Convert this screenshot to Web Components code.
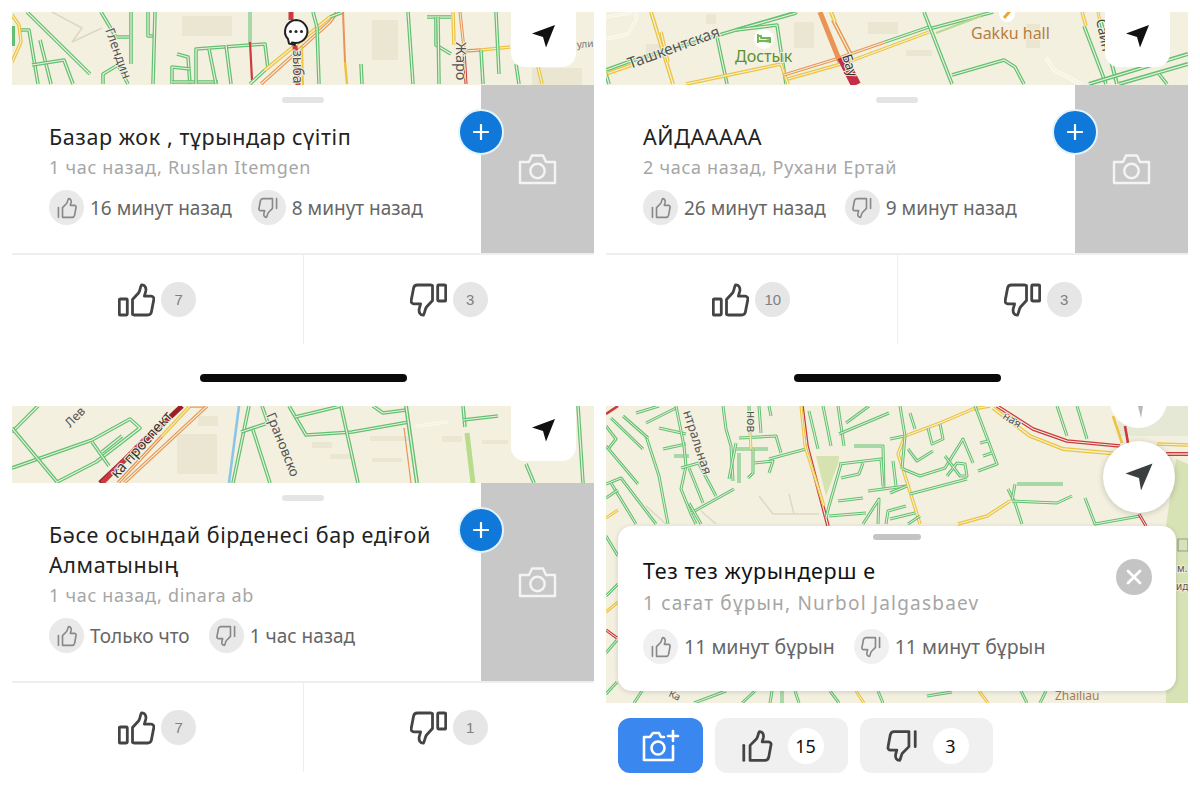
<!doctype html>
<html>
<head>
<meta charset="utf-8">
<style>
  html, body { margin: 0; background: #fff; }
  body { width: 1200px; height: 800px; overflow: hidden; font-family: "Noto Sans", sans-serif; }
  .grid { display: grid; grid-template-columns: 582px 582px; column-gap: 12px; padding: 12px 12px 0; }
  .col { display: flex; flex-direction: column; height: 394px; }
  .col.low { height: 382px; }
</style>
</head>
<body>
<div class="grid">
  <div class="col">
    <report-panel map="a" title-text="Базар жок , тұрындар сүітіп" meta="1 час назад, Ruslan Itemgen" up="16 минут назад" down="8 минут назад" ups="7" downs="3"></report-panel>
    <home-bar></home-bar>
  </div>
  <div class="col">
    <report-panel map="b" title-text="АЙДААААА" meta="2 часа назад, Рухани Ертай" up="26 минут назад" down="9 минут назад" ups="10" downs="3"></report-panel>
    <home-bar></home-bar>
  </div>
  <div class="col low">
    <report-panel map="c" title-text="Бәсе осындай бірденесі бар едіғой Алматының" meta="1 час назад, dinara ab" up="Только что" down="1 час назад" ups="7" downs="1"></report-panel>
  </div>
  <div class="col low">
    <float-panel></float-panel>
  </div>
</div>

<script>
const HAND_UP = 'M14.5 31.5V16.5L20.5 10C22.3 7.8 22 4 23.6 1.8C26.6 1.6 28.4 4.6 27.8 8L26.4 13.2H33.2C35 13.2 36.2 14.8 35.8 16.6L33.4 29C33 31 31.6 32 29.6 32H16Z';
const THIN_UP = 'M8 25V13L13 8C14.4 6.4 14.2 3.6 15.4 2C17.8 2 19 4 18.6 6.6L17.6 10.2H22.6C24 10.2 25 11.4 24.6 12.8L22.8 22.4C22.4 24 21.4 25 19.8 25Z';

function bigThumb(down) {
  const t = down ? 'transform="rotate(180 18.5 17)"' : '';
  return `<svg width="37" height="34" viewBox="0 0 37 34" fill="none" stroke="#444" stroke-width="2.8" stroke-linejoin="round" stroke-linecap="round"><g ${t}><rect x="1.3" y="16" width="8" height="16" rx="1"/><path d="${HAND_UP}"/></g></svg>`;
}
function smallThumb(down, color, size, sw) {
  const t = down ? 'transform="rotate(180 13.5 13.5)"' : '';
  return `<svg width="${size}" height="${size}" viewBox="0 0 27 27" fill="none" stroke="${color}" stroke-width="${sw}" stroke-linejoin="round" stroke-linecap="round"><g ${t}><path d="M3 13V25"/><path d="${THIN_UP}"/></g></svg>`;
}
const CAMERA = `<svg width="39" height="32" viewBox="0 0 39 32" fill="none" stroke="#f4f4f4" stroke-width="2.4" stroke-linejoin="round"><path d="M2 9H11L14 2.5H25L28 9H37V30H2Z"/><circle cx="19.5" cy="18" r="7.2"/></svg>`;

// road data per map: [colour, width, points]
const G = '#62c074', Y = '#eec33f', O = '#ea9354', R = '#cb3a3e', T = '#dcd8c6', W = '#fbfaf2';
const MAPS = {
  a: { h: 73, blocks: [[170,4,50,20],[360,8,26,40],[520,56,50,17]], roads: [
    [T,1.5,'40,0 70,16 60,30'],[T,1.5,'60,30 90,16'],
    [G,6,'0,14 0,34'],[Y,3.5,'0,50 9,30 7,13 0,3'],[G,3.6,'15,0 78,62'],[G,3.6,'9,18 17,18 26,72'],[G,3.6,'28,28 39,72'],[G,3.6,'20,53 52,48 61,72'],
    [G,3.6,'89,0 104,25 117,25'],[G,3.6,'119,0 119,52'],[G,3.6,'136,0 136,24 143,24'],[G,3.6,'143,0 141,72'],[G,3.6,'91,72 91,62 106,53 116,72'],
    [G,3.6,'165,42 176,45 178,72'],[G,3.6,'160,72 160,55 178,57'],[G,3.6,'160,70 206,70'],[G,3.6,'184,72 184,37 238,33 253,32 256,57'],[G,3.6,'197,37 204,72'],[G,3.6,'214,33 219,72'],
    [G,3,'238,0 238,32'],[R,2.2,'238,30 240,68'],
    [O,3.6,'249,72 318,10 325,0'],[G,3.6,'238,72 253,58'],[Y,3.6,'253,58 318,5'],[G,3.6,'318,5 331,0'],
    [R,5,'279,0 279,8'],[R,5,'283,34 286,73'],[Y,2,'290,34 291,73'],
    [G,3.6,'301,0 305,15 307,72'],[O,2,'331,0 333,50'],[Y,2.5,'333,50 335,72'],[G,3.6,'349,52 350,72'],
    [G,3.6,'396,0 401,72'],[G,3.6,'415,5 439,5'],[G,3.6,'424,5 424,33 439,42'],[G,3.6,'426,5 427,72'],
    [Y,3.6,'441,0 442,33'],[O,3,'448,0 452,37'],[R,3,'452,37 454,72'],[O,3.4,'452,39 469,38'],[Y,3.4,'469,38 498,35'],
    [G,3.6,'469,38 471,72'],[G,3.6,'484,0 487,62'],[G,3.6,'504,52 507,72'],[Y,3.6,'526,55 530,72']
  ], labels: [
    ['Глендин',93,18,70,13],['зыба',281,38,90,14],['Жаро',444,30,90,14.5],['ули',565,36,-4,10,'#777']
  ], extra: `<path d="M284 8a12 11.5 0 1 1-4 22.5l3 2.5-6-1.5-1-4.5A12 11.5 0 0 1 284 8Z" fill="#fff" stroke="#222" stroke-width="2"/><circle cx="278.5" cy="19.5" r="1.5" fill="#222"/><circle cx="284" cy="19.5" r="1.5" fill="#222"/><circle cx="289.5" cy="19.5" r="1.5" fill="#222"/>` },
  b: { h: 73, blocks: [[188,10,20,26],[262,10,30,12],[300,38,26,6],[420,12,14,24],[40,32,16,14],[100,2,10,10]], roads: [
    [W,3.5,'0,27 22,22 30,8 30,0'],[W,3,'0,5 26,1'],[W,4,'475,72 448,58 440,46'],
    [Y,4,'45,0 67,72'],[Y,3.5,'55,20 62,50'],[G,3.6,'0,58 22,50'],[Y,3.6,'0,62 26,53'],[G,3.6,'0,62 3,72'],
    [G,3.6,'22,50 113,23 191,0'],[G,3.6,'130,18 190,1'],[G,3.6,'111,25 121,72'],[G,3.6,'130,18 171,13 180,72'],
    [Y,3.6,'80,72 175,52 182,72'],[O,3.4,'178,63 230,47 279,30'],[Y,3.4,'182,67 242,50 323,20'],[G,3.4,'279,30 323,15'],[G,3.6,'323,17 387,0'],['#b8d890',2.4,'330,21 375,4'],
    [O,5,'214,0 234,50'],[O,4,'227,8 245,43'],[Y,4,'225,0 229,10'],['#c42f48',10,'236,45 250,73'],
    [G,3.6,'318,0 346,72'],[G,3.6,'346,63 398,48 409,55 418,72'],
    [G,3.6,'478,14 500,72'],[Y,3.6,'476,0 480,14'],[Y,3,'492,0 494,10'],[G,4,'495,10 511,72'],
    [G,4,'483,72 582,42'],[G,4,'513,72 582,52'],[G,3.6,'553,62 561,72']
  ], labels: [
    ['Ташкентская',24,57,-20,15.5,'#555'],['Достык',129,50,0,16,'#5d8f2c'],['Gakku hall',365,27,0,16,'#b97c3f'],['Бау',236,44,72,13.5,'#333'],['Саин',490,8,78,13.5,'#444']
  ], extra: `<circle cx="158" cy="27" r="10" fill="#fff"/><path d="M152 22V31M152 29H164V31M164 29V26H155V24H152" stroke="#74b558" stroke-width="2" fill="#9cd080"/><circle cx="401" cy="2" r="8" fill="#fff"/><path d="M398 6L404 -1" stroke="#eda62f" stroke-width="3"/>` },
  c: { h: 77, blocks: [[165,28,40,40],[300,36,20,6],[318,48,24,5],[358,30,40,5],[360,52,30,4],[430,30,20,6],[470,34,26,4],[186,10,20,10]], roads: [
    [G,3.6,'0,26 26,0'],[G,3.6,'0,62 80,34 118,13 128,22 84,56 45,76'],[G,3.6,'0,22 45,76'],[G,3.6,'80,36 97,60'],[G,3.6,'90,46 110,30'],
    ['#9c1f27',5,'88,77 170,0'],[R,5,'90,77 136,30'],[O,3.4,'106,77 150,30'],[Y,3.4,'150,30 178,0'],[O,3.4,'178,0 195,0'],[O,3.4,'112,77 195,0'],
    ['#8cc4e6',2.6,'227,0 217,77'],[G,3.6,'237,0 221,77'],[G,3.6,'229,26 256,17'],[G,3.6,'241,24 258,77'],[G,3.6,'250,0 256,17'],
    [G,3.6,'277,0 294,29 340,26 397,16'],[G,3.6,'283,11 329,0'],[G,3.6,'329,0 346,77'],[G,3.6,'361,0 371,7 394,4'],[G,4,'394,0 405,77'],[O,1.2,'392,22 399,77'],[W,3,'404,20 436,16'],
    ['#b9dc8c',5,'455,27 461,77'],[G,3.6,'451,0 453,21'],[G,3.6,'451,14 486,10'],[G,3.6,'514,58 522,77'],[G,3.6,'566,0 571,77']
  ], labels: [
    ['Лев',58,22,-45,12.5,'#555'],['ка проспект',105,73,-48,14.5,'#333'],['Грановско',254,9,68,13.5,'#555']
  ], extra: '' },
  d: { h: 297, blocks: [[512,0,70,30,'#e6e8d6']], areas: [
    ['#d6e2b0','210,50 233,50 232,58 220,90'],['#d7e2b5','570,53 582,58 582,297 560,297 560,120']
  ], roads: [
    [T,1.5,'153,90 167,108 213,108'],[T,1.5,'183,88 188,108'],[T,1.5,'40,100 60,118'],[T,1.5,'95,105 110,118'],
    [R,2.6,'0,8 12,0'],[G,3,'5,12 37,43'],[G,3,'40,30 53,70 58,97 62,118'],[G,3,'17,10 42,32'],[G,3,'0,20 10,33 3,42'],[G,3,'0,40 32,78'],[G,3,'0,78 15,72 50,118'],[G,3,'5,77 30,118'],
    [G,3,'30,7 53,0'],[G,3,'40,17 70,2'],[G,3,'53,22 80,28'],[G,3,'57,43 80,38'],[G,3,'68,50 83,50'],[G,3,'70,0 78,40 80,60 75,83 85,108 90,118'],
    [G,3,'75,62 100,55'],[G,3,'83,62 97,97'],[G,3,'93,58 110,90'],[G,3,'85,107 128,83'],[G,3,'83,97 95,118'],
    [G,3,'117,0 120,23 125,40 127,75'],[G,3,'130,37 123,73'],[G,3,'133,32 170,30 175,47'],[G,3,'130,43 162,43'],[G,3,'133,47 133,77'],[G,3,'147,43 147,67 142,72'],[G,3,'148,57 167,55 163,67'],[G,3,'163,53 200,43'],
    [G,3,'143,0 144,27'],[Y,3,'144,27 145,43'],[G,3,'153,0 155,27'],[G,3,'163,0 165,10'],
    [R,3.6,'196,0 201,40 222,120'],[Y,3,'195,0 199,40 218,100'],
    [G,3,'203,5 212,43'],[G,3,'217,0 225,40'],[G,3,'232,0 238,40'],[G,3,'233,28 283,7'],[G,3,'240,17 263,0'],[G,3,'248,40 277,40 278,83'],
    [G,3,'233,58 275,53 277,80'],[G,3,'235,58 223,100 220,112'],[G,3,'235,72 253,68 257,57'],[G,3,'232,95 257,92'],[G,3,'223,110 260,107'],[G,3,'262,85 300,80'],[G,3,'287,55 290,80'],[G,3,'257,118 273,93 272,118'],[G,3,'280,118 282,105 300,100'],
    [G,3,'284,33 299,30'],[Y,3.4,'299,30 334,17 367,3 384,0'],[Y,3.4,'299,30 292,48 297,63 314,118'],[G,3,'294,0 299,30 296,63'],[G,3,'304,7 309,23'],[G,3,'322,22 326,38 337,33 334,18'],[G,3,'369,0 391,58 372,65'],[G,3,'374,37 382,35'],[G,3,'377,50 386,47'],
    [G,3,'302,43 311,55 327,45'],[G,3,'297,63 314,70 339,62 357,33 367,57'],[G,3,'339,50 354,70 361,70 359,58 351,57 341,70'],[G,3,'304,88 361,73'],[G,3,'284,87 301,80'],[G,3,'284,113 309,107'],[G,3,'302,118 314,110'],
    [G,3,'402,83 409,97 416,118'],[G,3,'411,78 457,78'],[G,3,'409,78 406,95'],[G,3,'406,95 451,97 466,90'],[Y,3.4,'352,118 381,110 404,95'],[G,3,'479,92 489,118 534,110'],
    [G,3,'451,0 461,30'],[G,3,'471,0 481,33'],[Y,2.6,'507,10 516,37'],[R,2.6,'519,20 522,37'],
    [R,3.6,'391,0 427,23 461,35 514,40'],[R,4,'560,48 582,48'],[Y,4,'387,2 424,30 457,43 514,48'],[Y,3.4,'551,38 582,39'],
    [R,3,'533,108 540,120'],
    [Y,3,'0,112 12,104'],[G,3,'0,92 12,84'],[G,3,'0,130 12,150'],[G,3,'0,190 12,178'],[Y,3,'0,206 12,196'],[R,3,'0,224 11,232'],[G,3,'0,247 11,234'],[G,3,'0,288 11,276'],
    [G,3,'28,297 36,285'],[G,3,'88,297 120,285'],[G,3,'136,297 149,285'],[G,3,'164,297 166,285'],[G,3,'176,297 176,285'],[G,3,'193,297 189,285'],[G,3,'224,285 233,297'],[Y,3,'250,285 258,297'],[G,3,'272,285 277,297'],[G,3,'321,290 346,286'],[Y,3,'373,285 382,297'],[G,3,'415,285 421,297'],[G,3,'440,285 434,297']
  ], labels: [
    ['нтральная',77,6,72,13,'#555'],['нов',141,5,90,12,'#555'],['ная',396,12,32,11,'#555'],['Ка',62,290,25,10,'#555'],['Zhailiau',449,294,0,12,'#a87a50'],['м.',571,166,0,10,'#555'],['ид',570,184,0,10,'#555']
  ], extra: `<rect x="572" y="133" width="10" height="12" fill="none" stroke="#999" stroke-width="1.2"/><circle cx="532.5" cy="-7" r="29" fill="#fff"/><path d="M532 0L535 12L537 0Z" fill="#b9b9b9"/>` }
};

class TrafficMap extends HTMLElement {
  connectedCallback() {
    const m = MAPS[this.getAttribute('kind')];
    const lines = m.roads.map(([c, w, p]) => {
      const inner = w >= 3 && w <= 4.2 ? `<polyline points="${p}" stroke="#f0f3da" stroke-width="${w * 0.32}"/>` : '';
      return `<polyline points="${p}" stroke="${c}" stroke-width="${w}"/>${inner}`;
    }).join('');
    const blocks = (m.blocks || []).map(([x, y, w, h, c]) => `<rect x="${x}" y="${y}" width="${w}" height="${h}" fill="${c || '#eae6d2'}"/>`).join('');
    const areas = (m.areas || []).map(([c, p]) => `<polygon points="${p}" fill="${c}"/>`).join('');
    const labels = m.labels.map(([t, x, y, r, s, c]) =>
      `<text x="${x}" y="${y}" font-size="${s}" fill="${c || '#555'}" stroke="#f3f0df" stroke-width="2" paint-order="stroke" transform="rotate(${r} ${x} ${y})">${t}</text>`).join('');
    this.attachShadow({ mode: 'open' }).innerHTML = `
      <style>
        :host { display: block; height: ${m.h}px; background: #f3f0df; overflow: hidden; font-family: "Noto Sans", sans-serif; }
        svg { display: block; }
      </style>
      <svg width="582" height="${m.h}" viewBox="0 0 582 ${m.h}" fill="none" stroke-linejoin="round">
        ${blocks}${areas}${lines}${labels}${m.extra || ''}
      </svg>`;
  }
}

const statsTemplate = document.createElement('template');
statsTemplate.innerHTML = `
<style>
  :host { display: flex; align-items: center; font-size: var(--stat-size, 19px); color: #666; }
  .ic { width: 35px; height: 35px; border-radius: 50%; background: var(--chip, #e9e9e9); display: flex; align-items: center; justify-content: center; margin-right: 6px; flex: none; }
  span { white-space: nowrap; }
  .second { margin-left: 19px; }
</style>
<div class="ic" id="a"></div><span id="up"></span>
<div class="ic second" id="b"></div><span id="down"></span>
`;
class VoteStats extends HTMLElement {
  connectedCallback() {
    const root = this.attachShadow({ mode: 'open' });
    root.appendChild(statsTemplate.content.cloneNode(true));
    root.getElementById('a').innerHTML = smallThumb(false, '#888', 22, 2);
    root.getElementById('b').innerHTML = smallThumb(true, '#888', 22, 2);
    root.getElementById('up').textContent = this.getAttribute('up');
    root.getElementById('down').textContent = this.getAttribute('down');
  }
}

class VoteButton extends HTMLElement {
  connectedCallback() {
    const down = this.hasAttribute('down');
    this.attachShadow({ mode: 'open' }).innerHTML = `
      <style>
        :host { flex: 1; display: flex; align-items: center; justify-content: center; gap: 6px; font-family: "Liberation Sans", sans-serif; }
        .n { width: 35px; height: 35px; border-radius: 50%; background: #e6e6e6; color: #808080; font-size: 15px; display: flex; align-items: center; justify-content: center; }
      </style>
      ${bigThumb(down)}<div class="n"><slot></slot></div>`;
  }
}

const panelTemplate = document.createElement('template');
panelTemplate.innerHTML = `
<style>
  :host { display: block; }
  .sheet { position: relative; display: flex; border-bottom: 2px solid #eee; }
  .body { flex: 1; padding: 37px 0 28px 37px; position: relative; }
  .grab { position: absolute; left: 270px; top: 12px; width: 42px; height: 6px; border-radius: 3px; background: #e4e4e4; }
  h2 { margin: 0; font-weight: 400; font-size: 21.5px; letter-spacing: .6px; line-height: 30px; color: #222; width: 400px; }
  .meta { font-size: 18px; letter-spacing: .7px; line-height: 24px; color: #a6a6a6; margin: 3px 0 11px; white-space: nowrap; }
  .photo { width: 113px; background: #c8c8c8; display: flex; align-items: center; justify-content: center; }
  .add { position: absolute; left: 446px; top: 24px; width: 46px; height: 46px; box-sizing: border-box; border-radius: 50%; background: #0f78d8; border: 2px solid #e4f3fb; color: #fff; display: flex; align-items: center; justify-content: center; }
  .btns { display: flex; height: 89px; }
  .btns vote-button:first-child { border-right: 1px solid #eee; }
  .nav { position: absolute; right: 18px; top: 0; width: 65px; height: 55px; background: #fff; border-radius: 0 0 14px 14px; display: flex; align-items: flex-start; justify-content: center; padding-top: 0; }
  .nav svg { margin-top: 12px; }
  .top { position: relative; }
</style>
<div class="top">
  <traffic-map></traffic-map>
  <div class="nav"><svg width="25" height="24" viewBox="0 0 24 24"><path d="M23.5 1L.5 9.5L11.5 13L14.5 23.5Z" fill="#111"/></svg></div>
</div>
<div class="sheet">
  <div class="body">
    <div class="grab"></div>
    <h2></h2>
    <div class="meta"></div>
    <vote-stats></vote-stats>
  </div>
  <div class="photo"></div>
  <div class="add"><svg width="16" height="16" viewBox="0 0 16 16"><path d="M8 1V15M1 8H15" stroke="#fff" stroke-width="2.2" stroke-linecap="round"/></svg></div>
</div>
<div class="btns">
  <vote-button></vote-button>
  <vote-button down></vote-button>
</div>
`;
class ReportPanel extends HTMLElement {
  connectedCallback() {
    const root = this.attachShadow({ mode: 'open' });
    const c = panelTemplate.content.cloneNode(true);
    c.querySelector('traffic-map').setAttribute('kind', this.getAttribute('map'));
    c.querySelector('h2').textContent = this.getAttribute('title-text');
    c.querySelector('.meta').textContent = this.getAttribute('meta');
    const s = c.querySelector('vote-stats');
    s.setAttribute('up', this.getAttribute('up'));
    s.setAttribute('down', this.getAttribute('down'));
    c.querySelector('.photo').innerHTML = CAMERA;
    const b = c.querySelectorAll('vote-button');
    b[0].textContent = this.getAttribute('ups');
    b[1].textContent = this.getAttribute('downs');
    root.appendChild(c);
  }
}

class HomeBar extends HTMLElement {
  connectedCallback() {
    this.attachShadow({ mode: 'open' }).innerHTML = `
      <style>
        :host { display: flex; justify-content: center; margin-top: 30px; }
        div { width: 207px; height: 8px; border-radius: 4px; background: #0a0a0a; }
      </style><div></div>`;
  }
}

class FloatPanel extends HTMLElement {
  connectedCallback() {
    this.attachShadow({ mode: 'open' }).innerHTML = `
      <style>
        :host { display: block; }
        .top { position: relative; }
        .card { position: absolute; left: 12px; right: 12px; top: 120px; height: 165px; box-sizing: border-box; background: #fff; border-radius: 14px; box-shadow: 0 1px 5px rgba(0,0,0,.15); padding: 30px 0 0 25px; }
        .grab { position: absolute; left: 255px; top: 8px; width: 48px; height: 6px; border-radius: 3px; background: #c4c4c4; }
        h2 { margin: 0; font-weight: 400; font-size: 21.5px; letter-spacing: .6px; line-height: 30px; color: #111; }
        .meta { font-size: 19px; letter-spacing: 1.2px; line-height: 24px; color: #a6a6a6; margin: 5px 0 14px; white-space: nowrap; }
        .close { position: absolute; right: 24px; top: 33px; width: 36px; height: 36px; border-radius: 50%; background: #c4c4c4; display: flex; align-items: center; justify-content: center; }
        vote-stats { --chip: #f0f0f0; --stat-size: 19.5px; }
        .nav { position: absolute; right: 13px; top: 35px; width: 72px; height: 72px; border-radius: 50%; background: #fff; box-shadow: 0 1px 6px rgba(0,0,0,.2); display: flex; align-items: center; justify-content: center; }
        .bar { display: flex; gap: 12px; padding: 15px 0 0 12px; }
        .btn { height: 55px; border-radius: 12px; background: #f0f0f0; display: flex; align-items: center; justify-content: center; gap: 14px; font-size: 18px; color: #111; }
        .btn.cam { width: 85px; background: #3b87f0; }
        .btn.v { width: 133px; }
        .n { width: 36px; height: 36px; border-radius: 50%; background: #fff; display: flex; align-items: center; justify-content: center; }
      </style>
      <div class="top">
        <traffic-map kind="d"></traffic-map>
        <div class="nav"><svg width="28" height="28" viewBox="0 0 28 28"><path d="M27.5 .5L.5 10.5L14 15L16 27.5Z" fill="#3a3f42"/></svg></div>
        <div class="card">
          <div class="grab"></div>
          <h2>Тез тез журындерш е</h2>
          <div class="meta">1 сағат бұрын, Nurbol Jalgasbaev</div>
          <vote-stats up="11 минут бұрын" down="11 минут бұрын"></vote-stats>
          <div class="close"><svg width="16" height="16" viewBox="0 0 16 16"><path d="M2 2L14 14M14 2L2 14" stroke="#fff" stroke-width="2.8" stroke-linecap="round"/></svg></div>
        </div>
      </div>
      <div class="bar">
        <div class="btn cam"><svg width="38" height="34" viewBox="0 0 38 34" fill="none" stroke="#fff" stroke-width="2.6" stroke-linejoin="round" stroke-linecap="round"><path d="M22 8H19L17 4H11L8 8H2V31H31V17"/><circle cx="16" cy="19" r="6.5"/><path d="M31 2V12M26 7H36"/></svg></div>
        <div class="btn v">${smallThumb(false, '#444', 34, 2.2)}<div class="n">15</div></div>
        <div class="btn v">${smallThumb(true, '#444', 34, 2.2)}<div class="n">3</div></div>
      </div>`;
  }
}

customElements.define('traffic-map', TrafficMap);
customElements.define('vote-stats', VoteStats);
customElements.define('vote-button', VoteButton);
customElements.define('report-panel', ReportPanel);
customElements.define('home-bar', HomeBar);
customElements.define('float-panel', FloatPanel);
</script>
</body>
</html>
